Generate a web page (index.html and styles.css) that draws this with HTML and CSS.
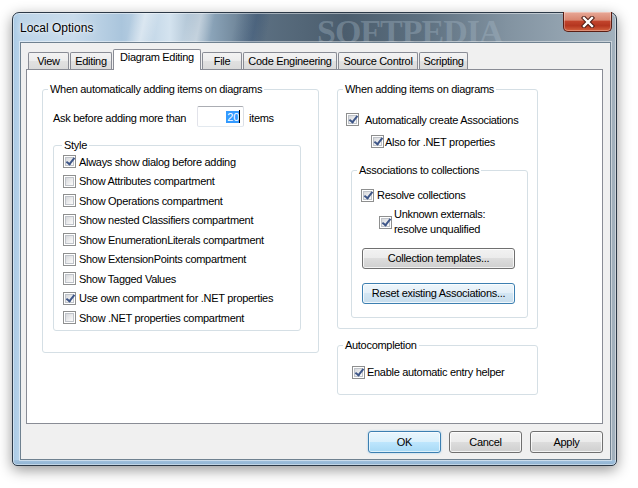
FILE: index.html
```html
<!DOCTYPE html>
<html>
<head>
<meta charset="utf-8">
<title>Local Options</title>
<link rel="stylesheet" href="styles.css">
</head>
<body>
<div class="desk">
  <div class="window">
    <div class="titlebar">
      <span class="title">Local Options</span>
      <span class="watermark">SOFTPEDIA</span>
      <div class="close">
        <svg width="14" height="12" viewBox="0 0 14 12">
          <path d="M3 2 L11 10 M11 2 L3 10" stroke="#4a1a12" stroke-width="4.4" stroke-linecap="square" fill="none"/>
          <path d="M3 2 L11 10 M11 2 L3 10" stroke="#ffffff" stroke-width="2.4" stroke-linecap="square" fill="none"/>
        </svg>
      </div>
    </div>
    <div class="client">
      <div class="tabs">
        <div class="tab t-view">View</div>
        <div class="tab t-editing">Editing</div>
        <div class="tab sel t-diagram">Diagram Editing</div>
        <div class="tab t-file">File</div>
        <div class="tab t-code">Code Engineering</div>
        <div class="tab t-source">Source Control</div>
        <div class="tab t-script">Scripting</div>
      </div>
      <div class="panel">
        <fieldset class="grp grp-left">
          <legend>When automatically adding items on diagrams</legend>
          <div class="ask">
            <span class="ask-label">Ask before adding more than</span>
            <div class="edit"><span class="selected">20</span><span class="caret"></span></div>
            <span class="ask-items">items</span>
          </div>
          <fieldset class="grp grp-style">
            <legend>Style</legend>
            <div class="row"><span class="cb on"></span><span>Always show dialog before adding</span></div>
            <div class="row"><span class="cb"></span><span>Show Attributes compartment</span></div>
            <div class="row"><span class="cb"></span><span>Show Operations compartment</span></div>
            <div class="row"><span class="cb"></span><span>Show nested Classifiers compartment</span></div>
            <div class="row"><span class="cb"></span><span>Show EnumerationLiterals compartment</span></div>
            <div class="row"><span class="cb"></span><span>Show ExtensionPoints compartment</span></div>
            <div class="row"><span class="cb"></span><span>Show Tagged Values</span></div>
            <div class="row"><span class="cb on"></span><span>Use own compartment for .NET properties</span></div>
            <div class="row"><span class="cb"></span><span>Show .NET properties compartment</span></div>
          </fieldset>
        </fieldset>
        <div class="rightcol">
          <fieldset class="grp grp-right">
            <legend>When adding items on diagrams</legend>
            <div class="row r-auto"><span class="cb on gap6"></span><span>Automatically create Associations</span></div>
            <div class="row r-also"><span class="cb on gap1"></span><span>Also for .NET properties</span></div>
            <fieldset class="grp grp-assoc">
              <legend>Associations to collections</legend>
              <div class="row r-resolve"><span class="cb on"></span><span>Resolve collections</span></div>
              <div class="row2 r-unknown"><span class="cb on gap2"></span><span class="two">Unknown externals:<br>resolve unqualified</span></div>
              <div class="btn wide b-coll">Collection templates...</div>
              <div class="btn wide hot b-reset">Reset existing Associations...</div>
            </fieldset>
          </fieldset>
          <fieldset class="grp grp-auto">
            <legend>Autocompletion</legend>
            <div class="row r-enable"><span class="cb on gap2"></span><span>Enable automatic entry helper</span></div>
          </fieldset>
        </div>
      </div>
      <div class="buttons">
        <div class="btn dlg default">OK</div>
        <div class="btn dlg">Cancel</div>
        <div class="btn dlg">Apply</div>
      </div>
    </div>
  </div>
</div>
</body>
</html>
```
FILE: styles.css
```css
html, body {
  margin: 0;
  padding: 0;
}
body {
  width: 638px;
  height: 488px;
  overflow: hidden;
  background: #ffffff;
  font-family: "Liberation Sans", Arial, sans-serif;
  font-size: 11px;
  color: #000;
}
.desk {
  padding: 12px 0 0 12px;
  height: 488px;
  box-sizing: border-box;
}
.window {
  position: relative;
  width: 605px;
  height: 454px;
  box-sizing: border-box;
  border: 1px solid #2c3947;
  border-radius: 7px 7px 5px 5px;
  padding: 0 5px 5px 7px;
  display: flex;
  flex-direction: column;
  box-shadow: 0 4px 14px rgba(0,0,0,0.42), inset 0 0 0 1px rgba(255,255,255,0.45);
  background:
    linear-gradient(to top, #8fb2d1 0, #a2c2de 5px, transparent 5px),
    linear-gradient(to right, #a9c9e4 0, #b9d4ea 7px, transparent 7px),
    linear-gradient(102deg, transparent 17%, rgba(255,255,255,0.45) 19%, transparent 21%, transparent 25%, rgba(255,255,255,0.35) 27%, transparent 29%, transparent 32%, rgba(40,70,110,0.35) 35%, transparent 37%),
    linear-gradient(90deg, #bcd4e8 0%, #c9dcec 10%, #aac5dc 18%, #d4e3ef 26%, #8aa3b8 33%, #5b6f81 41%, #4b5d6d 55%, #5d7080 68%, #8293a1 82%, #a2b1bd 100%);
}
.titlebar {
  position: relative;
  height: 29px;
  display: flex;
  align-items: center;
}
.title {
  position: relative;
  z-index: 2;
  font-family: "Liberation Sans", Arial, sans-serif;
  font-size: 12px;
  letter-spacing: 0;
  color: #000;
  text-shadow: 0 0 6px rgba(255,255,255,0.9), 0 0 2px rgba(255,255,255,0.9);
}
.watermark {
  position: absolute;
  left: 297px;
  top: -1px;
  font-family: "Liberation Serif", "Times New Roman", serif;
  font-weight: bold;
  font-size: 34px;
  line-height: 40px;
  letter-spacing: -1px;
  color: rgba(170, 188, 202, 0.35);
  z-index: 0;
}
.close {
  position: relative;
  z-index: 2;
  margin-left: auto;
  align-self: flex-start;
  margin-top: -1px;
  margin-right: -1px;
  width: 49px;
  height: 20px;
  box-sizing: border-box;
  border: 1px solid #5a1e14;
  border-top: none;
  border-radius: 0 0 5px 5px;
  background: linear-gradient(#e8a897 0%, #d98670 42%, #c1432b 50%, #b4361f 72%, #d4633f 100%);
  box-shadow: inset 0 0 0 1px rgba(255,255,255,0.3);
  display: flex;
  align-items: center;
  justify-content: center;
}
.close svg {
  display: block;
}
.client {
  position: relative;
  z-index: 1;
  flex: 1;
  background: #f0f0f0;
  border: 1px solid #6f8190;
  box-shadow: 0 0 0 1px rgba(255,255,255,0.45);
  padding: 6px 7px 0 5px;
  display: flex;
  flex-direction: column;
  letter-spacing: -0.3px;
}
.tabs {
  position: relative;
  z-index: 2;
  display: flex;
  align-items: flex-end;
  gap: 1px;
  height: 21px;
  padding-left: 2px;
  margin-bottom: -1px;
}
.tab {
  height: 17px;
  margin-bottom: 1px;
  box-sizing: border-box;
  border: 1px solid #898c95;
  border-bottom: none;
  border-radius: 2px 2px 0 0;
  background: linear-gradient(#f3f3f3 0%, #ececec 50%, #e1e1e1 51%, #dadada 100%);
  text-align: center;
  line-height: 13px;
  padding-top: 2px;
  white-space: nowrap;
}
.tab.sel {
  height: 21px;
  margin-bottom: 0;
  background: #ffffff;
  padding-top: 1px;
}
.t-view { width: 41px; }
.t-editing { width: 42px; }
.t-diagram { width: 88px; }
.t-file { width: 40px; }
.t-code { width: 94px; }
.t-source { width: 80px; }
.t-script { width: 49px; }
.panel {
  height: 355px;
  box-sizing: border-box;
  border: 1px solid #898c95;
  background: #ffffff;
  display: flex;
  align-items: flex-start;
  gap: 18px;
  padding: 13px 0 0 15px;
}
.grp {
  margin: 0;
  padding: 0;
  min-width: 0;
  box-sizing: border-box;
  border: 1px solid #d5dfe5;
  border-radius: 3px;
}
.grp > legend {
  margin-left: 5px;
  padding: 0 2px;
  line-height: 13px;
  font-size: 11px;
}
.grp-left {
  width: 277px;
  height: 270px;
}
.ask {
  display: flex;
  align-items: flex-start;
  height: 21px;
  margin: 10px 0 0 10px;
}
.ask-label {
  width: 144px;
  margin-top: 6px;
  line-height: 13px;
  white-space: nowrap;
}
.ask-items {
  margin-left: 5px;
  margin-top: 6px;
  line-height: 13px;
}
.edit {
  width: 47px;
  height: 21px;
  box-sizing: border-box;
  border: 1px solid #abadb3;
  border-color: #abadb3 #dbdfe6 #e3e9ef #e2e3ea;
  border-radius: 2px;
  display: flex;
  justify-content: flex-end;
  align-items: center;
  padding-right: 3px;
}
.selected {
  background: #3399ff;
  color: #ffffff;
  height: 12px;
  line-height: 12px;
  padding-left: 1px;
}
.caret {
  width: 1px;
  height: 13px;
  background: #000;
}
.grp-style {
  width: 248px;
  margin: 12px 0 0 10px;
  padding: 0 0 2px 9px;
}
.grp-style > legend { margin-left: -1px; }
.row {
  display: flex;
  align-items: center;
  height: 19.5px;
  white-space: nowrap;
}
.row2 {
  display: flex;
  align-items: center;
}
.two {
  line-height: 15px;
}
.cb {
  position: relative;
  flex: none;
  width: 13px;
  height: 13px;
  box-sizing: border-box;
  border: 1px solid #8e8f8f;
  background: #ffffff;
  margin-right: 3px;
}
.cb::before {
  content: "";
  position: absolute;
  left: 1px;
  top: 1px;
  width: 9px;
  height: 9px;
  box-sizing: border-box;
  border: 1px solid #bfc3c9;
  background: linear-gradient(135deg, #d6d8db 0%, #eeeeef 60%, #fbfbfb 100%);
}
.cb.on::after {
  content: "";
  position: absolute;
  left: 3.5px;
  top: 0px;
  width: 3px;
  height: 7px;
  border: solid #3e5688;
  border-width: 0 2px 2px 0;
  transform: rotate(38deg);
}
.cb.gap6 { margin-right: 6px; }
.cb.gap1 { margin-right: 1px; }
.cb.gap2 { margin-right: 2px; }
.rightcol {
  width: 201px;
  display: flex;
  flex-direction: column;
}
.grp-right {
  width: 201px;
  padding: 0 0 10px 8px;
}
.grp-right > legend { margin-left: -3px; }
.r-auto { margin-top: 14px; }
.r-also { margin-top: 2.5px; margin-left: 25px; }
.grp-assoc {
  width: 177px;
  margin: 12px 0 0 5px;
  padding: 0 0 13px 9px;
}
.grp-assoc > legend { margin-left: -4px; }
.r-resolve { margin-top: 9px; }
.r-unknown { margin-top: 2px; margin-left: 18px; }
.btn {
  box-sizing: border-box;
  border: 1px solid #707070;
  border-radius: 3px;
  background: linear-gradient(#f2f2f2 0%, #ebebeb 49%, #dddddd 50%, #cfcfcf 100%);
  box-shadow: inset 0 0 0 1px rgba(255,255,255,0.75);
  display: flex;
  align-items: center;
  justify-content: center;
  white-space: nowrap;
}
.btn.wide {
  width: 153px;
  height: 21px;
  margin-left: 1px;
}
.b-coll { margin-top: 10.5px; }
.b-reset { margin-top: 14px; }
.btn.hot {
  border-color: #3c7fb1;
  background: linear-gradient(#eef6fb 0%, #e3eff8 49%, #d3e6f3 50%, #c7dded 100%);
}
.grp-auto {
  width: 201px;
  margin-top: 10px;
  padding: 0 0 12px 14px;
}
.grp-auto > legend { margin-left: -9px; }
.r-enable { margin-top: 11px; }
.buttons {
  display: flex;
  justify-content: flex-end;
  gap: 8px;
  margin-top: 7px;
}
.btn.dlg {
  width: 73px;
  height: 22px;
}
.btn.default {
  border-color: #3c7fb1;
  background: linear-gradient(#eaf6fd 0%, #d9f0fc 49%, #bee6fd 50%, #a7d9f5 100%);
  box-shadow: inset 0 0 0 1px rgba(255,255,255,0.6), 0 0 2px rgba(60,160,230,0.5);
}
```
